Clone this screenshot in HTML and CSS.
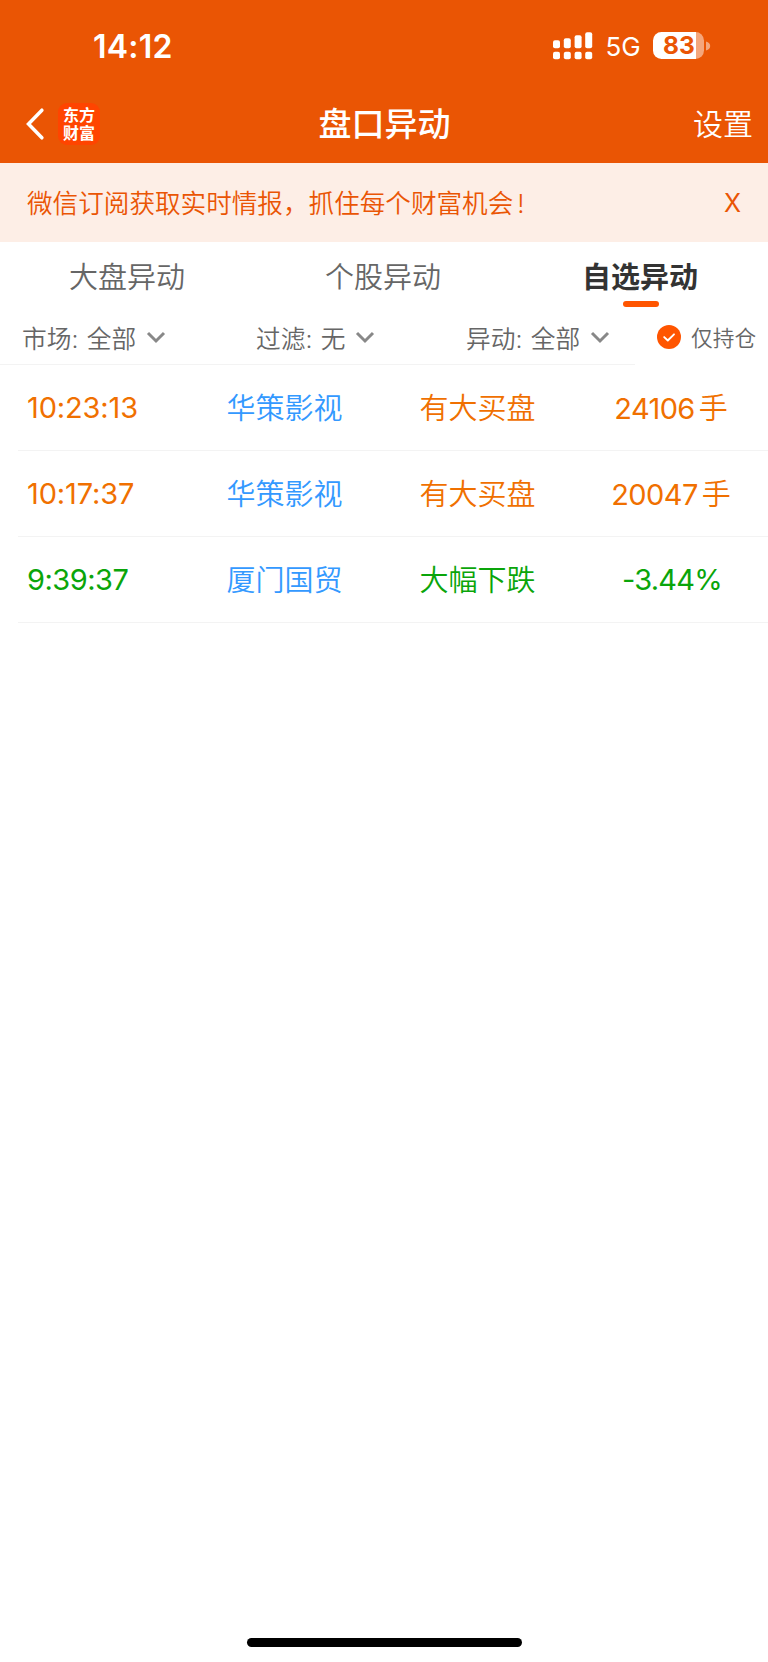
FILE: index.html
```html
<!DOCTYPE html>
<html lang="zh-CN">
<head>
<meta charset="utf-8">
<title>盘口异动</title>
<link rel="stylesheet" href="styles.css">
</head>
<body>
<div class="screen">
  <header class="header">
    <div class="status">
      <span class="clock">14:12</span>
      <div class="status-right">
        <svg class="signal" width="40" height="28" viewBox="0 0 40 28" fill="#fff">
          <rect x="0" y="8.3" width="7" height="8" rx="2"/>
          <rect x="10.8" y="6.2" width="7" height="10.1" rx="2"/>
          <rect x="21.6" y="3.2" width="7" height="13.1" rx="2"/>
          <rect x="32.2" y="0.2" width="7" height="16.1" rx="2"/>
          <rect x="0" y="19.7" width="7" height="7.5" rx="2"/>
          <rect x="10.8" y="19.7" width="7" height="7.5" rx="2"/>
          <rect x="21.6" y="19.7" width="7" height="7.5" rx="2"/>
          <rect x="32.2" y="19.7" width="7" height="7.5" rx="2"/>
        </svg>
        <span class="network">5G</span>
        <div class="battery"><span class="level">83</span></div>
        <svg class="battery-cap" width="5" height="10" viewBox="0 0 5 10"><path d="M0 0.5C5.6 1.5 5.6 8.5 0 9.500Z" fill="#f4a67c"/></svg>
      </div>
    </div>
    <nav class="nav">
      <div class="nav-left">
        <svg width="20" height="34" viewBox="0 0 20 34" fill="none" stroke="#fff" stroke-width="3.500" stroke-linecap="round" stroke-linejoin="miter"><path d="M16.900 3.200L3.500 17L16.900 30.800"/></svg>
        <div class="logo"><span>东方</span><span>财富</span></div>
      </div>
      <h1 class="title">盘口异动</h1>
      <span class="settings">设置</span>
    </nav>
  </header>
  <div class="banner">
    <span class="banner-text">微信订阅获取实时情报，抓住每个财富机会<span class="bang">!</span></span>
    <span class="close">X</span>
  </div>
  <div class="tabs">
    <div class="tab">大盘异动</div>
    <div class="tab">个股异动</div>
    <div class="tab active">自选异动</div>
  </div>
  <div class="filters">
    <div class="selects">
      <div class="select market"><span>市场:</span><span class="value">全部</span><svg class="chevron" width="20" height="14" viewBox="0 0 20 14"><path d="M2 3L10 11L18 3"/></svg></div>
      <div class="select sift"><span>过滤:</span><span class="value">无</span><svg class="chevron" width="20" height="14" viewBox="0 0 20 14"><path d="M2 3L10 11L18 3"/></svg></div>
      <div class="select change"><span>异动:</span><span class="value">全部</span><svg class="chevron" width="20" height="14" viewBox="0 0 20 14"><path d="M2 3L10 11L18 3"/></svg></div>
    </div>
    <div class="holding">
      <svg width="24" height="24" viewBox="0 0 24 24"><circle cx="12" cy="12" r="12" fill="#ff5500"/><path d="M7.200 12.100L10.800 15.500L17 9.300" fill="none" stroke="#fff" stroke-width="1.900" stroke-linecap="round" stroke-linejoin="round"/></svg>
      <span class="holding-label">仅持仓</span>
    </div>
  </div>
  <main class="list">
    <div class="row up"><span class="time">10:23:13</span><span class="name">华策影视</span><span class="event">有大买盘</span><span class="amount"><span class="num">24106</span><span class="unit">手</span></span></div>
    <div class="row up"><span class="time">10:17:37</span><span class="name">华策影视</span><span class="event">有大买盘</span><span class="amount"><span class="num">20047</span><span class="unit">手</span></span></div>
    <div class="row down"><span class="time short">9:39:37</span><span class="name">厦门国贸</span><span class="event">大幅下跌</span><span class="amount percent">-3.44%</span></div>
  </main>
  <div class="home-bar"></div>
</div>
</body>
</html>
```

FILE: styles.css
```css
* { box-sizing: border-box; }
body {
  margin: 0;
  background: #fff;
  font-family: Inter, "Noto Sans CJK SC", sans-serif;
  color: #666;
}
.screen { width: 768px; height: 1662px; display: flex; flex-direction: column; white-space: nowrap; }

.header { height: 163.400px; background: #ea5504; color: #fff; flex: none; }
.status { height: 86px; padding: 6px 57px 0 93px; display: flex; align-items: center; justify-content: space-between; }
.clock { font-size: 32px; font-weight: 600; line-height: 40px; padding-top: 1px; letter-spacing: 0.2px; }
.status-right { display: flex; align-items: center; height: 28px; margin-top: -1px; }
.network { font-size: 26px; line-height: 32px; margin-left: 13px; width: 47.500px; padding-top: 2px; }
.battery {
  width: 51px; height: 27px; border-radius: 8.500px;
  background: linear-gradient(to right, #fff 43px, #f4a67c 43px);
}
.level { display: block; color: #ea5504; font-size: 24.500px; font-weight: 700; line-height: 27px; text-align: center; padding-left: 1px; }
.battery-cap { margin-left: 2px; }
.nav { height: 76px; padding: 0 15px 0 25px; display: grid; grid-template-columns: 1fr auto 1fr; align-items: center; }
.nav-left { display: flex; align-items: center; gap: 13px; }
.logo {
  width: 42px; height: 42px; border-radius: 9px; background: #ff4400;
  display: flex; flex-direction: column; align-items: center; justify-content: center;
  font-size: 16px; font-weight: 700; line-height: 18px; padding-bottom: 1px;
}
.title { margin: 0 9px 0 0; font-size: 33px; font-weight: 500; line-height: 40px; }
.settings { justify-self: end; font-size: 30px; font-weight: 350; line-height: 40px; padding-bottom: 1px; }

.banner {
  height: 78.600px; padding: 0 27px 2px 27px; background: #fdeee6; color: #ea5504; flex: none;
  display: flex; align-items: center; justify-content: space-between; font-size: 25.600px;
}
.banner-text { font-weight: 350; }
.bang { margin-left: 4px; }
.close { font-size: 25px; padding-top: 2px; }

.tabs { height: 70px; display: grid; grid-template-columns: repeat(3, 1fr); flex: none; }
.tab { display: flex; flex-direction: column; align-items: center; padding: 16px 2px 0 0; font-size: 29px; font-weight: 350; line-height: 40px; }
.tab.active { color: #333; font-weight: 700; padding-right: 0; }
.active::after { content: ""; width: 36px; height: 6px; margin: 3px 0 0 1px; border-radius: 3px; background: #ff5500; }

.filters { height: 53px; display: flex; flex: none; }
.selects { width: 635px; padding-left: 22px; border-bottom: 1px solid #f3f3f3; display: flex; }
.select { display: flex; align-items: center; font-size: 24.700px; font-weight: 350; padding-bottom: 1px; }
.value { margin-left: 8.500px; }
.chevron { margin-left: 9.500px; fill: none; stroke: #888; stroke-width: 3; }
.market { width: 234px; }
.sift { width: 210px; }
.holding { padding: 0 0 2px 22px; display: flex; align-items: center; gap: 10px; font-size: 21.700px; font-weight: 350; }
.holding-label { padding-bottom: 2px; }

.row {
  height: 86px; margin-left: 18px; border-bottom: 1px solid #f3f3f3;
  display: grid; grid-template-columns: 170px 193px 193px 194px; align-items: center;
  font-size: 29px;
}
.time { padding-left: 9px; letter-spacing: -0.150px; }
.short { letter-spacing: -0.500px; }
.name, .event, .amount { text-align: center; padding-bottom: 2px; }
.name, .event, .unit { font-weight: 350; }
.name { color: #3399ff; }
.num { margin-right: 4px; letter-spacing: -0.600px; }
.amount.percent { letter-spacing: -0.800px; padding: 0 0 0 2px; }
.up { color: #f07000; }
.down { color: #0aa50a; }
.home-bar { width: 275px; height: 9px; border-radius: 5px; background: #000; margin: auto auto 15px 247px; }
```
